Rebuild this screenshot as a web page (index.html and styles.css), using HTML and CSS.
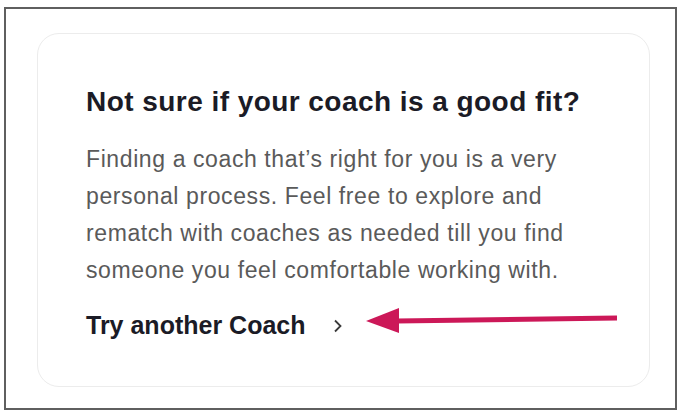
FILE: index.html
```html
<!DOCTYPE html>
<html lang="en">
<head>
    <meta charset="UTF-8">
    <meta name="viewport" content="width=device-width, initial-scale=1.0">
    <title>Coach fit</title>
    <link rel="stylesheet" href="styles.css">
</head>
<body>
    <div class="frame">
        <div class="card">
            <h2 class="card-title">Not sure if your coach is a good fit?</h2>
            <p class="card-text">Finding a coach that’s right for you is a very personal process. Feel free to explore and rematch with coaches as needed till you find someone you feel comfortable working with.</p>
            <a href="#" class="try-link">
                <span>Try another Coach</span>
                <svg class="chevron" width="10" height="14" viewBox="0 0 10 14">
                    <polyline points="2,1.5 7.5,7 2,12.5" fill="none" stroke="#3a3a3a" stroke-width="1.8"/>
                </svg>
            </a>
            <!-- annotation arrow pointing at the link -->
            <svg class="pointer" width="260" height="30" viewBox="0 0 260 30">
                <polygon points="2,16 35,3 35,28" fill="#cc1858"/>
                <line x1="33" y1="16" x2="253" y2="13" stroke="#cc1858" stroke-width="5"/>
            </svg>
        </div>
    </div>
</body>
</html>
```

FILE: styles.css
```css
body {
    margin: 0;
    background-color: #ffffff;
    font-family: "Liberation Sans", Arial, sans-serif;
}
.frame {
    display: flex;
    flex-direction: column;
    box-sizing: border-box;
    width: 673px;
    height: 403px;
    margin: 7px 0 0 4px;
    padding: 24px 25px 21px 31px;
    border: 2px solid #5f5f5f;
}
.card {
    position: relative;
    flex: 1;
    padding: 51px 40px 0 48px;
    border: 1.5px solid #ececec;
    border-radius: 22px;
}
.card-title {
    margin: 0;
    font-size: 28px;
    line-height: 1.2;
    font-weight: bold;
    color: #1b1b26;
    letter-spacing: 0.45px;
}
.card-text {
    margin: 22px 0 0;
    font-size: 23px;
    line-height: 37px;
    color: #5a5a5a;
    letter-spacing: 0.6px;
}
.try-link {
    display: inline-flex;
    align-items: center;
    gap: 27px;
    margin-top: 21px;
    font-size: 25px;
    line-height: 1.2;
    font-weight: bold;
    color: #1b1b26;
    text-decoration: none;
}
.chevron {
    margin-top: 2px;
}
.pointer {
    position: absolute;
    left: 326px;
    top: 271px;
}
```
